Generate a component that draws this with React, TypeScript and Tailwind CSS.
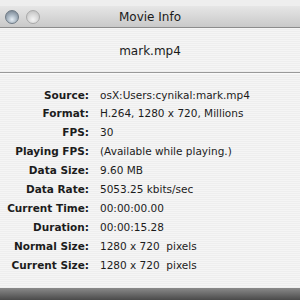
const rows: [string, string][] = [
  ["Source:", "osX:Users:cynikal:mark.mp4"],
  ["Format:", "H.264, 1280 x 720, Millions"],
  ["FPS:", "30"],
  ["Playing FPS:", "(Available while playing.)"],
  ["Data Size:", "9.60 MB"],
  ["Data Rate:", "5053.25 kbits/sec"],
  ["Current Time:", "00:00:00.00"],
  ["Duration:", "00:00:15.28"],
  ["Normal Size:", "1280 x 720  pixels"],
  ["Current Size:", "1280 x 720  pixels"],
];

function Light({ lit }: { lit: boolean }) {
  return (
    <div
      className={`w-[14px] h-[14px] rounded-full border ${
        lit
          ? "border-[#6f7b86] bg-[radial-gradient(circle_at_50%_70%,#e6eef5_0%,#a9b6c2_45%,#6b7784_100%)]"
          : "border-[#a9a9a9] bg-[radial-gradient(circle_at_50%_70%,#f4f4f4_0%,#d8d8d8_50%,#b9b9b9_100%)]"
      }`}
    />
  );
}

export default function App() {
  return (
    <div className="w-[300px] h-[300px] overflow-hidden flex flex-col bg-[#f0f0f0] font-['DejaVu_Sans',sans-serif]">
      <div className="h-[6px] bg-[#eeeeee]" />
      {/* title bar */}
      <div className="relative h-[22px] flex items-center px-[5px] gap-[7px] bg-[linear-gradient(#e6e6e6,#c9c9c9)] border-b border-[#8c8c8c]">
        <Light lit />
        <Light lit={false} />
        <div className="absolute inset-0 flex items-center justify-center text-[12px] text-[#1a1a1a]">
          Movie Info
        </div>
      </div>
      {/* body */}
      <div className="flex-1 flex flex-col bg-[repeating-linear-gradient(0deg,#eeeeee_0px,#eeeeee_1px,#f5f5f5_1px,#f5f5f5_2px)]">
        <div className="h-[44px] flex items-center justify-center text-[12px] text-[#1a1a1a] pt-[1px]">
          mark.mp4
        </div>
        <div className="h-px bg-[#9a9a9a]" />
        <div className="h-px bg-[#fafafa]" />
        <div className="pt-[12px] flex flex-col">
          {rows.map(([k, v]) => (
            <div key={k} className="h-[18.9px] flex items-center text-[10.5px] text-[#1c1c1c]">
              <div className="w-[89px] text-right font-bold whitespace-nowrap">{k}</div>
              <div className="pl-[11px] whitespace-pre">{v}</div>
            </div>
          ))}
        </div>
        <div className="flex-1" />
      </div>
      <div className="h-[12px] bg-[linear-gradient(#8a8a8a,#4a4a4a)]" />
    </div>
  );
}
